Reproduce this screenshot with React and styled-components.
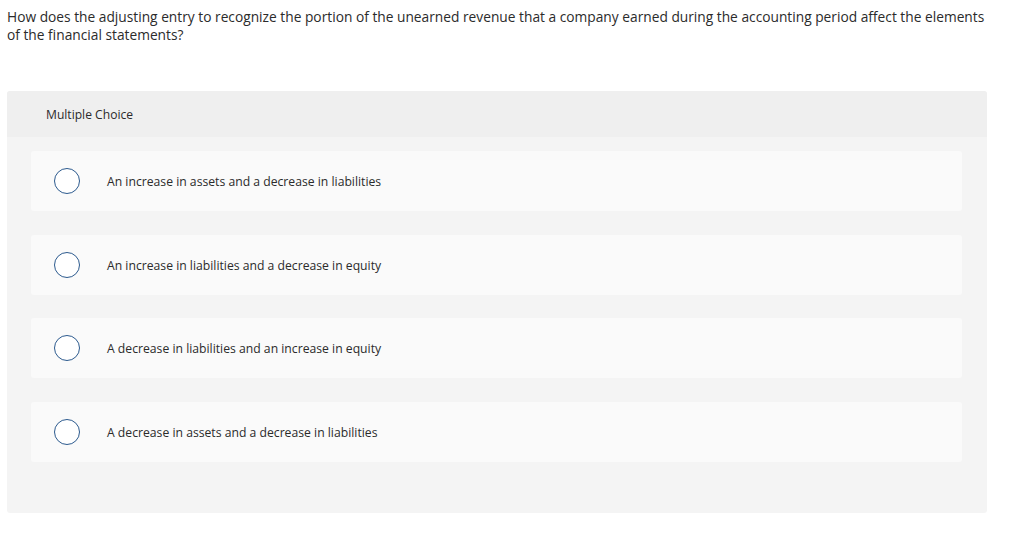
import React from "react";
import styled, { createGlobalStyle } from "styled-components";

const Global = createGlobalStyle`
  html, body { margin: 0; padding: 0; background: #fff; }
  body { font-family: "Open Sans", "Noto Sans", sans-serif; color: #2b2b2b; }
`;

const Page = styled.div`
  padding: 8px 0 0 7px;
  width: 980px;
`;

const Question = styled.p`
  margin: 0;
  font-size: 13.75px;
  line-height: 18px;
  width: 990px;
`;

const Panel = styled.section`
  margin-top: 47px;
  width: 980px;
  height: 422px;
  background: #f4f4f4;
  border-radius: 3px;
  display: flex;
  flex-direction: column;
`;

const Header = styled.div`
  height: 46px;
  background: #efefef;
  border-radius: 3px 3px 0 0;
  display: flex;
  align-items: center;
  padding-left: 39px;
  font-size: 12.1px;
`;

const Options = styled.div`
  display: flex;
  flex-direction: column;
  gap: 23.67px;
  padding: 14px 25px 0 24px;
`;

const Option = styled.label`
  height: 60px;
  background: #fafafa;
  border-radius: 3px;
  display: flex;
  align-items: center;
  padding-left: 23px;
  font-size: 12.2px;
  cursor: pointer;
`;

const OptionText = styled.span`
  padding-top: 1px;
`;

const Radio = styled.span`
  width: 24px;
  height: 24px;
  border: 1px solid #2c5a8e;
  border-radius: 50%;
  background: #fff;
  flex: none;
  margin-right: 27px;
`;

const options = [
  "An increase in assets and a decrease in liabilities",
  "An increase in liabilities and a decrease in equity",
  "A decrease in liabilities and an increase in equity",
  "A decrease in assets and a decrease in liabilities",
];

export default function App() {
  return (
    <Page>
      <Global />
      <Question>
        How does the adjusting entry to recognize the portion of the unearned revenue that a company earned during the accounting period affect the elements of the financial statements?
      </Question>
      <Panel>
        <Header>Multiple Choice</Header>
        <Options>
          {options.map((o) => (
            <Option key={o}>
              <Radio />
              <OptionText>{o}</OptionText>
            </Option>
          ))}
        </Options>
      </Panel>
    </Page>
  );
}
